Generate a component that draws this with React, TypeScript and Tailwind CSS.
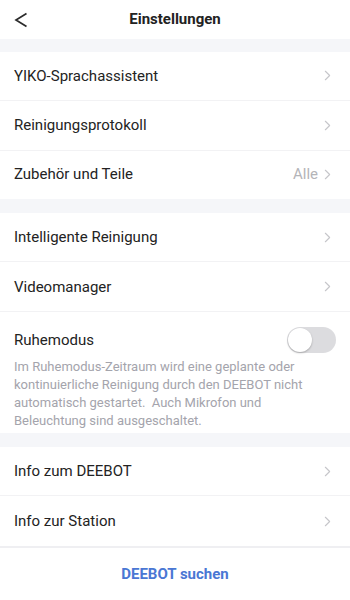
import { ChevronRight } from 'lucide-react';

const font = { fontFamily: 'Roboto, "Noto Sans", sans-serif' };

function Row({ label, value, divider = true, h = 'h-[50px]' }: { label: string; value?: string; divider?: boolean; h?: string }) {
  return (
    <div className={`flex ${h} items-center justify-between bg-white pl-[14px] pr-[14px] ${divider ? 'border-b border-[#f2f2f4]' : ''}`}>
      <span className="text-[15px] text-[#232323]">{label}</span>
      <span className="flex items-center gap-[1px]">
        {value && <span className="text-[15px] text-[#b4b4b8]">{value}</span>}
        <ChevronRight size={17} strokeWidth={1.6} className="text-[#c6c6ca]" />
      </span>
    </div>
  );
}

function Band({ h }: { h: string }) {
  return <div className={`${h} bg-[#f5f6f9]`} />;
}

export default function App() {
  return (
    <div className="flex h-[600px] w-[350px] flex-col overflow-hidden bg-white" style={font}>
      <header className="relative flex h-[39px] items-center justify-center">
        <svg className="absolute left-[14px] top-[12px]" width="14" height="16" viewBox="0 0 14 16" fill="none">
          <path d="M12.5 1.5 L2 8 L12.5 14.5" stroke="#2b2b2b" strokeWidth="1.7" strokeLinejoin="miter" />
        </svg>
        <h1 className="text-[15px] font-bold text-[#222]">Einstellungen</h1>
      </header>
      <Band h="h-[13px]" />
      <Row label="YIKO-Sprachassistent" h="h-[49px]" />
      <Row label="Reinigungsprotokoll" />
      <Row label="Zubehör und Teile" value="Alle" divider={false} h="h-[48px]" />
      <Band h="h-[14px]" />
      <Row label="Intelligente Reinigung" />
      <Row label="Videomanager" />
      <div className="bg-white px-[14px] pb-[3px] pt-[15px]">
        <div className="flex items-center justify-between">
          <span className="text-[15px] text-[#232323]">Ruhemodus</span>
          <div className="flex h-[26px] w-[49px] items-center rounded-full bg-[#dcdcdf] px-[1px]">
            <div className="h-[24px] w-[24px] rounded-full bg-white shadow-[0_1px_2px_rgba(0,0,0,0.25)]" />
          </div>
        </div>
        <p className="mt-[5px] w-[310px] text-[13px] leading-[18px] text-[#a4a4ac]">
          Im Ruhemodus-Zeitraum wird eine geplante oder kontinuierliche Reinigung durch den DEEBOT nicht automatisch gestartet.{'\u00a0 '}Auch Mikrofon und Beleuchtung sind ausgeschaltet.
        </p>
      </div>
      <Band h="h-[14px]" />
      <Row label="Info zum DEEBOT" h="h-[49px]" />
      <Row label="Info zur Station" divider={false} />
      <div className="h-[2px] bg-[#efeff2]" />
      <div className="flex h-[52px] items-center justify-center">
        <span className="text-[15px] font-bold text-[#4a77d4]">DEEBOT suchen</span>
      </div>
    </div>
  );
}
